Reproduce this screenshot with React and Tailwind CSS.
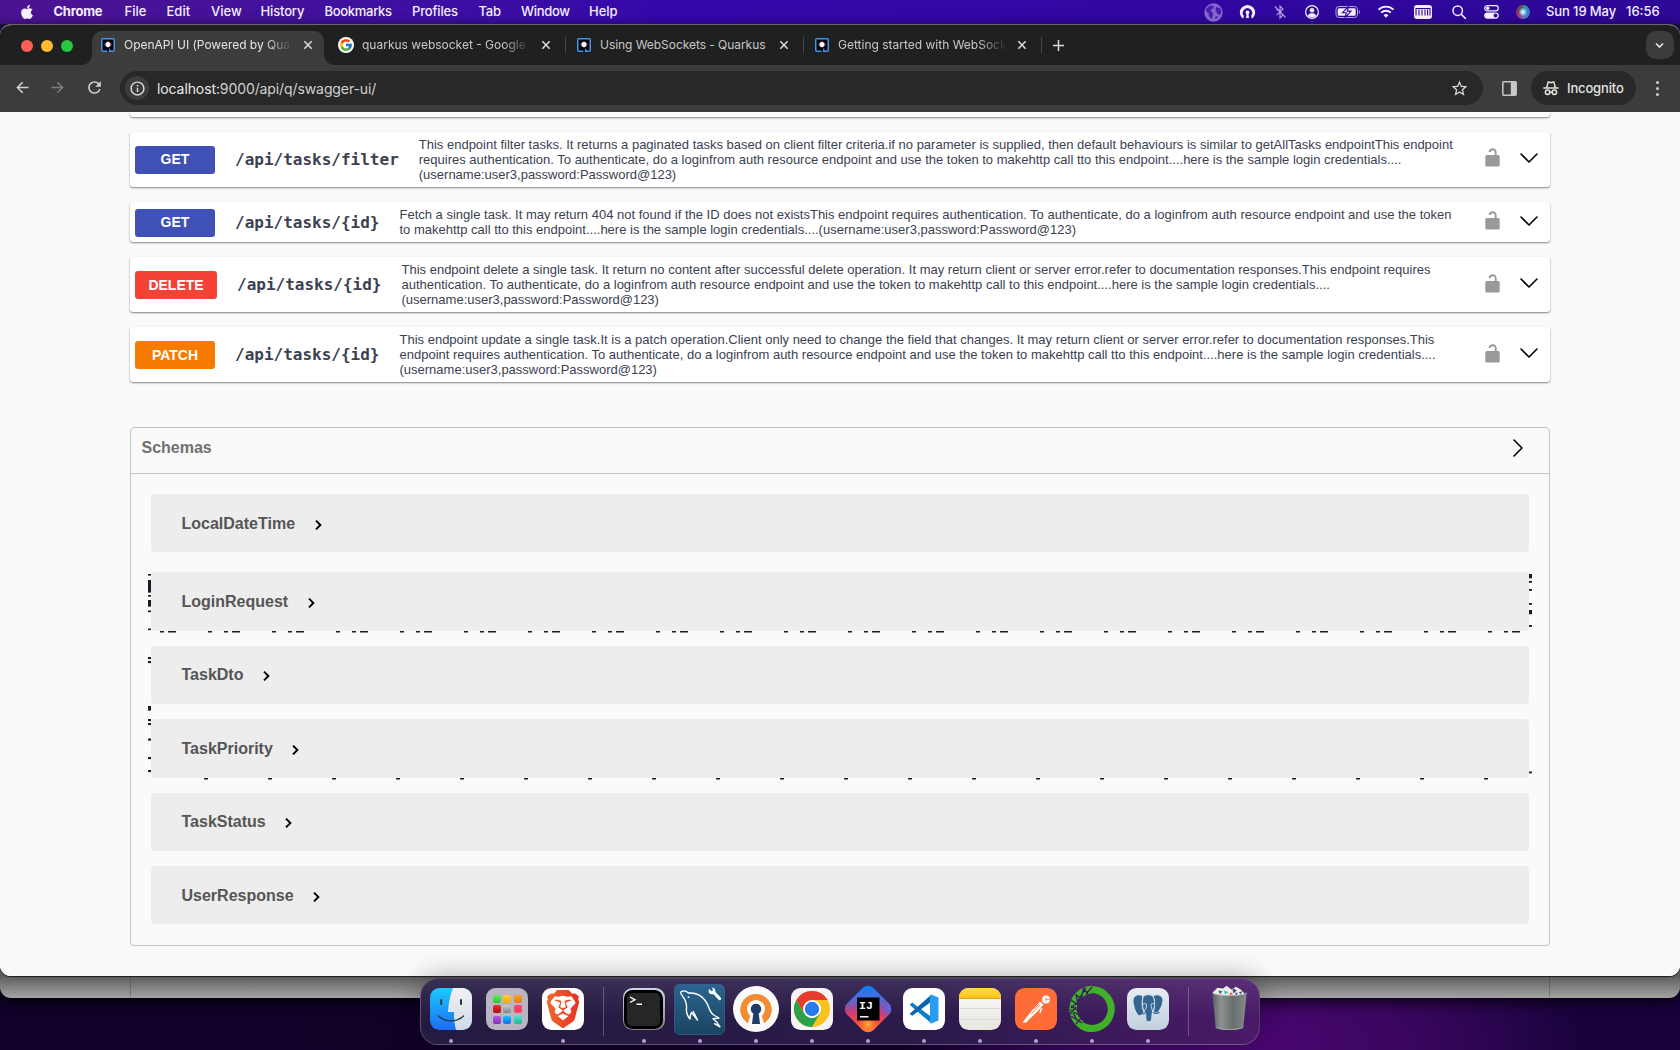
import React from "react";
import { FaApple } from "react-icons/fa";
import { FcGoogle } from "react-icons/fc";
import { SiBrave } from "react-icons/si";
import { MdRefresh, MdStarBorder, MdOutlineInfo } from "react-icons/md";

const UI = "font-['Inter',sans-serif]";
const HELV = "font-['Liberation_Sans',Arial,sans-serif]";

const menus = [
  ["Chrome", "w-[71px] font-bold tracking-[-0.25px]"],
  ["File", "w-[42px] font-medium"],
  ["Edit", "w-[44.5px] font-medium"],
  ["View", "w-[49.5px] font-medium"],
  ["History", "w-[64px] font-medium tracking-[-0.15px]"],
  ["Bookmarks", "w-[87.5px] font-medium tracking-[-0.3px]"],
  ["Profiles", "w-[66.5px] font-medium tracking-[-0.15px]"],
  ["Tab", "w-[42.5px] font-medium tracking-[-0.2px]"],
  ["Window", "w-[68px] font-medium tracking-[-0.3px]"],
  ["Help", "w-[40px] font-medium"],
];

function Keyhole({ size, body, hole, back }) {
  return (
    <svg width={size} height={size} viewBox="0 0 24 24">
      {back && <circle cx="12" cy="12" r="12" fill={back} />}
      {back ? (
        <path d="M7.800 19.400 9 15.600A4.700 4.700 0 1 1 15 15.600L16.200 19.400A8.200 8.200 0 1 0 7.800 19.400Z" fill={body} />
      ) : (
        <path d="M5.600 20.800 7 17A6.600 6.600 0 1 1 17 17L18.400 20.800A10.800 10.800 0 1 0 5.600 20.800Z" fill={body} />
      )}
      <path d="M12 9.300a2.700 2.700 0 0 1 1.400 5l.7 5.500H9.900l.7-5.500a2.700 2.700 0 0 1 1.400-5Z" fill={hole} />
    </svg>
  );
}

function MenuBar() {
  return (
    <div className={`flex h-6 items-center bg-gradient-to-r from-[#4c1391] via-[#3507ab] via-40% to-[#2d0796] text-[13px] leading-none text-[#f3effb] ${UI}`}>
      <div className="flex w-[53.5px] justify-center pb-px">
        <FaApple size={16} />
      </div>
      {menus.map(([name, cls]) => (
        <span key={name} className={`shrink-0 pb-px whitespace-nowrap ${cls}`}>{name}</span>
      ))}
      <div className="ml-auto flex h-full items-center">
        <div className="flex w-9 justify-center">
          <svg width="19" height="19" viewBox="0 0 19 19">
            <circle cx="9.500" cy="9.500" r="9.200" fill="#8566cf" />
            <path d="M2.500 5.500 6 2.500l4 .5-1 2.500L6.500 7.500l2 2 .5 2.500-1.500 4.500L5 13l-.5-3-2.500-1.500ZM12 4l4 1 1.500 3.500L16 12l-2.500-1L11.500 7.500ZM11 14l2.500-1 .5 1.500-2.500 1.500Z" fill="#4a1db0" />
          </svg>
        </div>
        <div className="flex w-[33px] justify-center"><Keyhole size={17} body="#f6f2ff" hole="#f6f2ff" /></div>
        <div className="flex w-[31px] justify-center text-[#b8a4ea]">
          <svg width="14" height="16" viewBox="0 0 14 16" fill="none" stroke="currentColor" strokeWidth="1.1">
            <path d="M3.500 11.200 10 5 7 2v12l3-3.200-2.400-2.200M5.300 6.700 3.500 5M2 2.500l10.500 11" />
          </svg>
        </div>
        <div className="flex w-[33px] justify-center">
          <svg width="16" height="16" viewBox="0 0 16 16">
            <circle cx="8" cy="8" r="6.400" fill="none" stroke="#f3effb" strokeWidth="1.200" />
            <circle cx="8" cy="6.200" r="2.300" fill="#f3effb" />
            <path d="M3.900 11.500C4.700 9.700 6 9.200 8 9.200s3.300.5 4.100 2.300A5.600 5.600 0 0 1 8 13.400a5.600 5.600 0 0 1-4.100-1.900Z" fill="#f3effb" />
          </svg>
        </div>
        <div className="flex w-[39px] justify-center">
          <svg width="26" height="14" viewBox="0 0 26 14">
            <rect x="1" y="1.500" width="21.500" height="11" rx="3" fill="none" stroke="#b5a3e6" />
            <rect x="2.700" y="3.200" width="18" height="7.600" rx="1.500" fill="#f3effb" />
            <path d="M23.800 5v4c1.500-.5 1.500-3.500 0-4Z" fill="#b5a3e6" />
            <path d="M13.500 1.500 7.500 7.700h3.800l-1.200 4.800 6-6.400h-3.800Z" fill="#f3effb" stroke="#2f07a0" strokeWidth="1.100" />
          </svg>
        </div>
        <div className="flex w-[37px] justify-center">
          <svg width="18" height="14" viewBox="0 0 18 14" fill="none" stroke="#f3effb" strokeWidth="1.900">
            <path d="M1.500 4.700a10.600 10.600 0 0 1 15 0M4.200 7.700a6.800 6.800 0 0 1 9.600 0" />
            <path d="M9 12.800 6.600 10.300a3.400 3.400 0 0 1 4.800 0Z" fill="#f3effb" stroke="none" />
          </svg>
        </div>
        <div className="flex w-[38px] justify-center">
          <svg width="18" height="14" viewBox="0 0 18 14">
            <rect width="18" height="14" rx="3" fill="#f3effb" />
            <path d="M2 10.500V3.500h14v7M5 4.500v6M8 4.500v6M11 4.500v6M13.600 4.500v6" fill="none" stroke="#3507a0" strokeWidth="1.100" />
          </svg>
        </div>
        <div className="flex w-[33px] justify-center">
          <svg width="14" height="14" viewBox="0 0 14 14" fill="none" stroke="#f3effb" strokeWidth="1.500">
            <circle cx="5.700" cy="5.700" r="4.700" />
            <path d="m9.200 9.200 4.200 4.200" strokeLinecap="round" />
          </svg>
        </div>
        <div className="flex w-[33px] justify-center">
          <svg width="15" height="14" viewBox="0 0 15 14">
            <rect x=".7" y=".7" width="13.600" height="5.200" rx="2.600" fill="none" stroke="#f3effb" strokeWidth="1.200" />
            <circle cx="3.700" cy="3.300" r="1.700" fill="#f3effb" />
            <rect x=".2" y="7.400" width="14.600" height="6.300" rx="3.100" fill="#f3effb" />
            <circle cx="11.500" cy="10.500" r="1.900" fill="#3507a0" />
          </svg>
        </div>
        <div className="flex w-[30px] justify-center">
          <div className="size-[14px] rounded-full bg-[radial-gradient(circle_at_50%_50%,#ffffff_0%,#9fd8ef_18%,transparent_45%),conic-gradient(#2fa36f,#2b7fd4_90deg,#5a7fc0_160deg,#a63a8a_220deg,#8a2f56_280deg,#3a6a6a)]" />
        </div>
        <span className="w-[88px] pb-px pl-2 font-medium whitespace-pre tracking-[-0.1px]">Sun 19 May</span>
        <span className="w-[54px] pb-px font-medium">16:56</span>
      </div>
    </div>
  );
}

function Favicon() {
  return (
    <svg width="14" height="14" viewBox="0 0 14 14" className="shrink-0">
      <rect width="14" height="14" rx="2" fill="#4695eb" />
      <path d="M1.500 1.500h11v11H9.800L8.600 10l-1 4H6.300v-1.500H1.500Z" fill="#05070c" />
      <path d="M7 3.500 9.500 5v3L7 9.500 4.500 8V5Z" fill="#fff" />
      <path d="M3.700 5.200 5.500 6.300 3.700 7.500Z" fill="#4695eb" />
      <path d="m10.500 5.400-1.800 1 1.800 1.200Z" fill="#ff3050" />
      <path d="M5 3.700h1.700L5.500 5Z" fill="#ff3050" />
    </svg>
  );
}

function Close() {
  return (
    <svg width="10" height="10" viewBox="0 0 10 10" className="shrink-0" stroke="#dcdcdc" strokeWidth="1.500">
      <path d="m1.300 1.300 7.400 7.400M8.700 1.300 1.300 8.700" />
    </svg>
  );
}

function TabStrip() {
  const title = "overflow-hidden whitespace-nowrap text-[12px] leading-4";
  const fade = "[mask-image:linear-gradient(to_right,#000_84%,transparent)]";
  return (
    <div className={`flex h-10 items-start bg-[#1f2120] pt-[6px] ${UI}`}>
      <div className="flex h-[29px] w-[92px] items-center gap-2 pl-[21px]">
        <i className="size-3 rounded-full bg-[#ff5f57]" />
        <i className="size-3 rounded-full bg-[#febc2e]" />
        <i className="size-3 rounded-full bg-[#28c840]" />
      </div>
      <div className="relative flex h-[34px] w-[232px] items-center rounded-t-[10px] bg-[#3c3c3c] pb-[6px] pl-[9px] text-[#e3e3e3]">
        <i className="absolute bottom-0 -left-[10px] size-[10px] bg-[radial-gradient(circle_at_0_0,transparent_9.5px,#3c3c3c_10px)]" />
        <i className="absolute -right-[10px] bottom-0 size-[10px] bg-[radial-gradient(circle_at_100%_0,transparent_9.5px,#3c3c3c_10px)]" />
        <Favicon />
        <span className={`ml-[9px] w-[168px] tracking-[-0.02px] ${title} ${fade}`}>OpenAPI UI (Powered by Quarkus)</span>
        <span className="ml-[11px] flex"><Close /></span>
      </div>
      <div className="flex h-[28px] w-[241px] items-center pl-[14px] text-[#c7c7c7]">
        <span className="flex size-4 items-center justify-center rounded-full bg-white"><FcGoogle size={14} /></span>
        <span className={`ml-2 w-[168px] ${title} ${fade}`}>quarkus websocket - Google Search</span>
        <span className="ml-[11px] flex"><Close /></span>
      </div>
      <div className="flex h-[28px] w-[238px] items-center text-[#c7c7c7]">
        <i className="mr-[11px] h-4 w-px bg-[#474747]" />
        <Favicon />
        <span className={`ml-[9px] w-[168px] tracking-[-0.05px] ${title}`}>Using WebSockets - Quarkus</span>
        <span className="ml-[11px] flex"><Close /></span>
      </div>
      <div className="flex h-[28px] w-[238px] items-center text-[#c7c7c7]">
        <i className="mr-[11px] h-4 w-px bg-[#474747]" />
        <Favicon />
        <span className={`ml-[9px] w-[168px] ${title} ${fade}`}>Getting started with WebSockets</span>
        <span className="ml-[11px] flex"><Close /></span>
      </div>
      <div className="flex h-[28px] items-center">
        <i className="mr-[10.5px] h-4 w-px bg-[#474747]" />
        <svg width="11" height="11" viewBox="0 0 11 11" stroke="#dcdcdc" strokeWidth="1.500"><path d="M5.500 0v11M0 5.500h11" /></svg>
      </div>
      <div className="mr-[6.5px] ml-auto flex size-7 items-center justify-center rounded-[10px] bg-[#3c3c3c]">
        <svg width="9" height="7" viewBox="0 0 9 7" fill="none" stroke="#e3e3e3" strokeWidth="1.700"><path d="m1 1.500 3.500 3.500L8 1.500" /></svg>
      </div>
    </div>
  );
}

function Toolbar() {
  return (
    <div className={`flex h-[47px] items-start bg-[#3c3c3c] pt-[6px] ${UI}`}>
      <div className="flex h-[34px] w-[120px] items-center pb-px pl-[16px]">
        <svg width="13" height="13" viewBox="0 0 13 13" fill="none" stroke="#d0d0d0" strokeWidth="1.600"><path d="M12.500 6.500H1.500M6.700 1.200 1.400 6.500l5.300 5.300" /></svg>
        <svg width="13" height="13" viewBox="0 0 13 13" className="ml-[22px]" fill="none" stroke="#7d7d7d" strokeWidth="1.600"><path d="M.5 6.500h11M6.300 1.200l5.300 5.300-5.300 5.300" /></svg>
        <MdRefresh size={19} color="#d0d0d0" className="ml-[20.500px]" />
      </div>
      <div className="flex h-[34px] w-[1362.5px] items-center rounded-full bg-[#282828] pl-[5px]">
        <span className="flex size-6 items-center justify-center rounded-full bg-[#3c3c3c]"><MdOutlineInfo size={17} color="#dedede" /></span>
        <span className="ml-2 text-[14px] tracking-[-0.1px] text-[#d0d0d0]"><span className="text-[#e8e8e8]">localhost:</span>9000/api/q/swagger-ui/</span>
        <MdStarBorder size={19} color="#d8d8d8" className="mr-[14px] ml-auto" />
      </div>
      <div className="flex h-[34px] w-[48.5px] items-center pl-[19px]">
        <svg width="15" height="15" viewBox="0 0 15 15"><rect x=".8" y=".8" width="13.400" height="13.400" rx="1" fill="none" stroke="#c7c7c7" strokeWidth="1.500" /><path d="M8.800 1h5.400v13H8.800Z" fill="#c7c7c7" /></svg>
      </div>
      <div className="flex h-[34px] w-[105px] items-center rounded-full bg-[#282828] pl-3 text-[13px] font-medium text-[#e3e3e3]">
        <svg width="16" height="16" viewBox="0 0 16 16" fill="none" stroke="#e3e3e3" strokeWidth="1.500">
          <path d="M.3 8h15.400M3.700 7.600 5.200 1.900 8 2.700l2.800-.8 1.500 5.700M6.700 12.300q1.300-.8 2.600 0" />
          <circle cx="4.600" cy="12.300" r="2.200" /><circle cx="11.400" cy="12.300" r="2.200" />
        </svg>
        <span className="mt-px ml-2 tracking-[-0.16px]">Incognito</span>
      </div>
      <div className="flex h-[34px] w-[43px] flex-col items-center justify-center gap-[3px]">
        <i className="size-[3px] rounded-full bg-[#d0d0d0]" />
        <i className="size-[3px] rounded-full bg-[#d0d0d0]" />
        <i className="size-[3px] rounded-full bg-[#d0d0d0]" />
      </div>
    </div>
  );
}

const CARD = "rounded-[3px] bg-white shadow-[0_1px_2px_rgba(0,0,0,0.48)]";

const ops = [
  {
    m: "GET", path: "/api/tasks/filter", box: "h-[55.5px]", badge: "w-20 bg-[#3f51b5]",
    lines: [
      "This endpoint filter tasks. It returns a paginated tasks based on client filter criteria.if no parameter is supplied, then default behaviours is similar to getAllTasks endpointThis endpoint",
      "requires authentication. To authenticate, do a loginfrom auth resource endpoint and use the token to makehttp call tto this endpoint....here is the sample login credentials....",
      "(username:user3,password:Password@123)",
    ],
  },
  {
    m: "GET", path: "/api/tasks/{id}", box: "h-[40px]", badge: "w-20 bg-[#3f51b5]",
    lines: [
      "Fetch a single task. It may return 404 not found if the ID does not existsThis endpoint requires authentication. To authenticate, do a loginfrom auth resource endpoint and use the token",
      "to makehttp call tto this endpoint....here is the sample login credentials....(username:user3,password:Password@123)",
    ],
  },
  {
    m: "DELETE", path: "/api/tasks/{id}", box: "h-[55px]", badge: "w-[82px] bg-[#f44336]",
    lines: [
      "This endpoint delete a single task. It return no content after successful delete operation. It may return client or server error.refer to documentation responses.This endpoint requires",
      "authentication. To authenticate, do a loginfrom auth resource endpoint and use the token to makehttp call to this endpoint....here is the sample login credentials....",
      "(username:user3,password:Password@123)",
    ],
  },
  {
    m: "PATCH", path: "/api/tasks/{id}", box: "h-[55px]", badge: "w-20 bg-[#f57c00]",
    lines: [
      "This endpoint update a single task.It is a patch operation.Client only need to change the field that changes. It may return client or server error.refer to documentation responses.This",
      "endpoint requires authentication. To authenticate, do a loginfrom auth resource endpoint and use the token to makehttp call tto this endpoint....here is the sample login credentials....",
      "(username:user3,password:Password@123)",
    ],
  },
];

function Operation({ op }) {
  return (
    <div className={`flex items-center pl-[5px] ${CARD} ${op.box}`}>
      <div className={`mt-px flex h-7 items-center justify-center rounded-[3px] text-[14px] font-bold text-white ${op.badge}`}>{op.m}</div>
      <div className="mt-px ml-5 font-['DejaVu_Sans_Mono',monospace] text-[16px] leading-5 font-bold text-[#3b4151]">{op.path}</div>
      <div className="ml-5 text-[13px] leading-[15px] text-[#3b4151]">
        {op.lines.map((l) => (
          <p key={l} className="whitespace-nowrap">{l}</p>
        ))}
      </div>
      <div className="mr-[11px] ml-auto flex shrink-0 items-center pb-[3px]">
        <svg width="15" height="19" viewBox="0 0 15 19">
          <path d="M.3 8.500q0-1.500 1.500-1.500h11.400q1.500 0 1.500 1.500V17q0 1.500-1.500 1.500H1.800Q.3 18.500.3 17Z" fill="#999" />
          <path d="M10.700 8V4.200c0-1.800-1-3-2.900-3-1.900 0-3 .9-3.200 2.800" fill="none" stroke="#999" strokeWidth="1.900" />
        </svg>
        <svg width="20" height="12" viewBox="0 0 20 12" className="ml-[19px]" fill="none" stroke="#000" strokeWidth="1.600" strokeLinecap="round" strokeLinejoin="round">
          <path d="m2 2 8 8 8-8" />
        </svg>
      </div>
    </div>
  );
}

const models = [
  ["LocalDateTime", "mb-5"],
  ["LoginRequest", "mb-[15px]"],
  ["TaskDto", "mb-[15px]"],
  ["TaskPriority", "mb-[15px]"],
  ["TaskStatus", "mb-[15px]"],
  ["UserResponse", ""],
];

/* Stray outline fragments around the model rows: [x, y, w, h] relative to the schema box. */
function OutlineFragments() {
  const r = [];
  const left = [[147, 1], [153, 12], [168, 1], [173, 6], [183.5, 1], [201.5, 1], [230, 1.5], [234, 1.5], [279, 4], [292, 1.5], [296, 1.5], [311.5, 1.5], [330, 1.5], [343, 1.5]];
  left.forEach(([y, h]) => r.push([18, y, 3, h + 0.6]));
  [[147, 4], [154, 1.5], [162, 1.5], [176, 1.5], [183, 4], [198, 1.5], [344.5, 1.5]].forEach(([y, h]) => r.push([1399, y, 3, h + 0.3]));
  r.push([30, 204, 4, 1.5], [38, 204, 8, 1.5]);
  for (let i = 0; i <= 20; i++) {
    const x = 78 + i * 64;
    r.push([x, 204, 4, 1.5], [x + 16, 204, 4, 1.5], [x + 24, 204, 8, 1.5], [x - 4, 351, 4, 1.5]);
  }
  return (
    <svg className="pointer-events-none absolute -top-px -left-px" width="1420" height="519" fill="#1b1a26">
      {r.map(([x, y, w, h], i) => <rect key={i} x={x} y={y} width={w} height={h} />)}
    </svg>
  );
}

function Page() {
  return (
    <div className={`h-[864px] overflow-hidden bg-[#fafafa] px-[130px] ${HELV}`}>
      <div className={`mb-[14.5px] h-[5px] rounded-t-none ${CARD}`} />
      <div className="flex flex-col gap-[15px]">
        {ops.map((op, i) => <Operation key={i} op={op} />)}
      </div>
      <div className="relative mt-[45px] h-[519px] rounded-[4px] border border-[#c4c4c4]">
        <div className="flex h-[46px] items-center justify-between border-b border-[#c4c4c4] pr-[25px] pb-[5px] pl-[10.5px] text-[16px] font-bold text-[#707070]">
          Schemas
          <svg width="12" height="20" viewBox="0 0 12 20" fill="none" stroke="#000" strokeWidth="1.600" strokeLinecap="round" strokeLinejoin="round"><path d="m2 2 8 8-8 8" /></svg>
        </div>
        <div className="px-5 pt-5">
          {models.map(([name, mb]) => (
            <div key={name} className={`flex h-[58.4px] items-center rounded-[4px] bg-[#ededed] pl-[30.5px] text-[16px] font-bold text-[#555] ${mb}`}>
              <span className="pt-px">{name}</span>
              <svg width="8" height="12" viewBox="0 0 8 12" className="mt-[3px] ml-[19.5px]" fill="none" stroke="#000" strokeWidth="1.900"><path d="m1 1.600 4.400 4.400L1 10.400" /></svg>
            </div>
          ))}
        </div>
        <OutlineFragments />
      </div>
    </div>
  );
}

const tile = "size-[42px] rounded-[9.5px] overflow-hidden flex items-center justify-center";

function Finder() {
  return (
    <svg width="42" height="42" viewBox="0 0 42 42" className="rounded-[9.5px]">
      <defs><linearGradient id="fa" x2="0" y2="1"><stop stopColor="#1ccbfb" /><stop offset="1" stopColor="#1b6cf5" /></linearGradient>
        <linearGradient id="fb" x2="0" y2="1"><stop stopColor="#f2f2f4" /><stop offset="1" stopColor="#cfdbe8" /></linearGradient></defs>
      <rect width="42" height="42" fill="url(#fa)" />
      <path d="M23 0c-3 8-4.500 15-5 24h6c-.2 6 .4 12 2 18h16V0Z" fill="url(#fb)" />
      <path d="M11.200 12v4M31 12v4" stroke="#26374a" strokeWidth="2" strokeLinecap="round" />
      <path d="M8.500 28c7 6.500 18 6.500 25 0" fill="none" stroke="#26374a" strokeWidth="1.400" strokeLinecap="round" />
    </svg>
  );
}

function Launchpad() {
  return (
    <div className={`${tile} bg-[#b9b5c3]`}>
      <div className="grid grid-cols-3 gap-[2.5px]">
        <i className="size-[8px] rounded-[2px] bg-gradient-to-b from-[#5cf05c] to-[#27c52c]" />
        <i className="size-[8px] rounded-[2px] bg-gradient-to-b from-[#ffcf2e] to-[#f7a800]" />
        <i className="size-[8px] rounded-[2px] bg-gradient-to-b from-[#ff9e17] to-[#ea7a1c]" />
        <i className="size-[8px] rounded-[2px] bg-gradient-to-b from-[#f02f2f] to-[#b90606]" />
        <i className="size-[8px] rounded-[2px] bg-gradient-to-b from-[#c6ced6] to-[#7e8389]" />
        <i className="size-[8px] rounded-[2px] bg-gradient-to-b from-[#ff3b78] to-[#f84455]" />
        <i className="size-[8px] rounded-[2px] bg-gradient-to-b from-[#b756e5] to-[#8131b4]" />
        <i className="size-[8px] rounded-[2px] bg-gradient-to-b from-[#12c5fb] to-[#1d67ef]" />
        <i className="size-[8px] rounded-[2px] bg-gradient-to-b from-[#4ce3d0] to-[#1eb48b]" />
      </div>
    </div>
  );
}

function Brave() {
  return (
    <div className={`${tile} bg-white`}>
      <svg width="0" height="0" className="absolute"><defs><linearGradient id="br"><stop stopColor="#f1692b" /><stop offset="1" stopColor="#e8301f" /></linearGradient></defs></svg>
      <SiBrave size={38} style={{ fill: "url(#br)" }} />
    </div>
  );
}

function Terminal() {
  return (
    <div className={`${tile} bg-gradient-to-b from-[#c8dae3] to-[#85807c] p-[1.5px]`}>
      <div className="size-full rounded-[8.5px] bg-black p-[3px]">
        <svg width="33" height="33" viewBox="0 0 33 33" className="rounded-[5px] bg-[#262626]" fill="none" stroke="#fff" strokeWidth="1.400"><path d="m3 4 5 2.800L3 9.500M9.500 11.300H15" /></svg>
      </div>
    </div>
  );
}

function Workbench() {
  return (
    <svg width="51" height="51" viewBox="0 0 51 51">
      <defs><linearGradient id="mw" x2="0" y2="1"><stop stopColor="#2b6591" /><stop offset="1" stopColor="#1b4462" /></linearGradient></defs>
      <rect x=".5" y=".5" width="50" height="50" rx="5" fill="url(#mw)" stroke="#3c7199" strokeWidth=".6" />
      <path d="M6.500 8c3-2 6-.8 8 1 10-.7 17 5 20.500 15 1 3 2 5.500 5.500 7.500l4.500 2.500-6 .8 3.500 3 3.500 5-6-3.500M6.500 8c.5 3 3 5 4.500 8 1 3 2 5 1.500 8-.5 4 .5 8 3.500 11 0-3 .5-4.500 1.500-6.500l6 7.500-4.500-9" fill="none" stroke="#fff" strokeWidth="1.400" strokeLinejoin="round" />
      <circle cx="14.500" cy="13.200" r=".9" fill="#fff" />
      <path d="m38.500 7 7 7.500" stroke="#fff" strokeWidth="3.200" strokeLinecap="round" />
      <circle cx="38" cy="7" r="3.300" fill="#fff" /><path d="m35 3 3.500 3.500" stroke="#285d85" strokeWidth="2.400" />
    </svg>
  );
}

function Chrome() {
  return (
    <div className={`${tile} bg-[#f4f4f4]`}>
      <svg width="38" height="38" viewBox="-19 -19 38 38">
        <circle r="18" fill="#fcc31e" />
        <path d="M-15.600-9A18 18 0 0 1 15.600-9H0L-7.800 4.500Z" fill="#e63b2e" />
        <path d="M-15.600-9A18 18 0 0 0 0 18L7.800 4.500-7.800 4.500Z" fill="#2da04c" />
        <circle r="9" fill="#fff" /><circle r="7.200" fill="#2a78ee" />
      </svg>
    </div>
  );
}

function Idea() {
  return (
    <svg width="48" height="48" viewBox="0 0 48 48">
      <defs>
        <linearGradient id="ij" x2="0" y2="1"><stop stopColor="#0c7ff5" /><stop offset=".3" stopColor="#5468d8" /><stop offset=".58" stopColor="#d03a70" /><stop offset=".85" stopColor="#ff5038" /><stop offset="1" stopColor="#ff7a3c" /></linearGradient>
        <radialGradient id="ig" cx=".5" cy=".82" r=".25"><stop stopColor="#ffb72e" /><stop offset="1" stopColor="#ff5a38" stopOpacity="0" /></radialGradient>
        <radialGradient id="ib" cx="1" cy=".5" r=".25"><stop stopColor="#4a6cf0" /><stop offset="1" stopColor="#4a6cf0" stopOpacity="0" /></radialGradient>
      </defs>
      {["url(#ij)", "url(#ig)", "url(#ib)"].map((f) => (
        <path key={f} d="M18.500 3Q24-1.500 29.500 3L45 18.500Q49.500 24 45 29.500L29.500 45Q24 49.500 18.500 45L3 29.500Q-1.500 24 3 18.500Z" fill={f} />
      ))}
      <rect x="13" y="12.500" width="22.500" height="23" fill="#000" />
      <text x="15" y="24" fill="#fff" fontFamily="Liberation Mono, monospace" fontSize="11.500" fontWeight="700">IJ</text>
      <path d="M16 31.800h8.500" stroke="#fff" strokeWidth="1.500" />
    </svg>
  );
}

function Code() {
  return (
    <div className={`${tile} bg-white`}>
      <svg width="30" height="30" viewBox="0 0 30 30">
        <path d="M1 10.500 3.200 8.500 22.500 23v6.500L1.400 11.500Z" fill="#0a7dcb" />
        <path d="M1 19.500 22.500.5V7.500L3.200 21.800.8 20Z" fill="#0667ad" />
        <path d="M22 .5 29.500 3.500v23L22 29.500l-1-.6V1Z" fill="#2a9df0" />
      </svg>
    </div>
  );
}

function Notes() {
  return (
    <div className="flex size-[42px] flex-col overflow-hidden rounded-[9.5px] bg-gradient-to-b from-[#fbfbfb] to-[#e8e6df]">
      <div className="h-[11px] border-b border-[#d2a52b] bg-gradient-to-b from-[#ffdb48] to-[#fdc50d]" />
      <div className="mt-[9px] h-px bg-[#dddcda]" />
      <div className="mt-[10px] h-px bg-[#dddcda]" />
    </div>
  );
}

function PostmanIcon() {
  return (
    <div className={`${tile} bg-[#ff6c37]`}>
      <svg width="42" height="42" viewBox="0 0 42 42">
        <circle cx="31" cy="11.500" r="3.900" fill="#fff" />
        <path d="M31 9.500v4M31 11.500h3" stroke="#ff6c37" strokeWidth=".8" />
        <path d="M25 13.500 28.500 16.500 22.500 23.500 13 32.500 11.500 34.500H7.500L17 22.500Z" fill="#fff" />
        <path d="m19 21 5-5M16.500 25.500l8.500-8" stroke="#ff6c37" strokeWidth=".8" />
        <path d="m26.500 20-1.500 5" stroke="#fff" strokeWidth="1.400" />
      </svg>
    </div>
  );
}

function Anaconda() {
  return (
    <svg width="48" height="48" viewBox="0 0 48 48" fill="none">
      <path d="M24 4.500A19.500 19.500 0 1 1 13 40.300" stroke="#43b02a" strokeWidth="7" />
      <path d="M13.500 40A19.500 19.500 0 0 1 24 4.500" stroke="#43b02a" strokeWidth="7.500" />
      <path d="M8 39 14 32M3 31l11 7M2 25l9 5M1 30l7-8M3 21l6 4M3 15l7 5M3 23l10-9M8 10l6 4M9 17l9-14M15 3l5 6M18 9l6-7M9 35 5 28M8 9l2 11M16 2l-3 12" stroke="#3a1d5c" strokeWidth="1.300" />
    </svg>
  );
}

function Elephant() {
  return (
    <div className={`${tile} bg-gradient-to-b from-[#e6ecf2] to-[#c2d0de]`}>
      <svg width="32" height="32" viewBox="0 0 32 32">
        <path d="M10.500 3C5.500.8 1 3 1.500 8.500 2 14 4.500 21.500 7.500 22.200c1.500.3 2.700-1.700 4-3.200C9.200 15 9.500 8 10.500 3Z" fill="#336791" />
        <path d="M21.500 3c5-2 9.500.5 9 5-.5 4-2.500 8-5 11.500-1 .8-2.500.3-3.500-1 1.500-5 1.500-11-.5-15.500Z" fill="#336791" />
        <path d="M11.300 3.200c3-2 6.400-2 9.400-.3 2.300 4 2.600 9.600.6 14.600-1.200 2-1.400 4-1.500 7-.1 2.500-.8 4.300-3 4.300-2.300 0-3-1.600-3-4.300 0-2.500.3-4.300-1.600-6.300-2.300-3.700-2.200-10-.9-15Z" fill="#336791" stroke="#dde6ee" strokeWidth=".9" />
        <path d="M11 11.500c1.800-1.500 3.300-1 3.500.5.3 2.500-1 4.500-2.500 6M21.800 11c-1.500-1-2.800-.5-2.800 1 0 2 1.200 3.500 1.500 6.500 1.600 1.500 4.500 1.500 7.500.5" fill="none" stroke="#dde6ee" strokeWidth=".9" />
        <path d="M9.500 20.500c1.800.8 3 .3 4-1M21 19.500c2 1.300 4.500 1 6.500-.3" fill="none" stroke="#336791" strokeWidth="1.200" />
      </svg>
    </div>
  );
}

function Trash() {
  return (
    <svg width="39" height="50" viewBox="0 0 42 52">
      <defs><linearGradient id="tr"><stop stopColor="#5c6263" /><stop offset=".25" stopColor="#8c9192" /><stop offset=".6" stopColor="#686d6e" /><stop offset="1" stopColor="#858a8b" /></linearGradient></defs>
      <path d="m3 8 5-5 6 1 4-3 5 4 5-3 5 3 4 4-3 5H7Z" fill="#ececec" />
      <path d="m9 6 4 1-2 3ZM24 3l5 3-4 3ZM31 8l4-1-2 3Z" fill="#4b4f63" />
      <path d="m15 6 5 2-4 2Z" fill="#35b9c9" /><path d="m22 8 3 2-4 1Z" fill="#d5532d" /><path d="m27 8 3 1-2 3Z" fill="#2a63b8" />
      <path d="M2.500 8.500c4 4 33 4 37 0L36 45c-.4 5-29.500 5-30 0Z" fill="url(#tr)" />
      <path d="M2.500 8.500c4 4 33 4 37 0" fill="none" stroke="#b6babb" strokeWidth=".8" />
      <path d="M6 45c1 4 29 4 30 0" fill="none" stroke="#a5a9aa" strokeWidth="1" />
    </svg>
  );
}

function DockItem({ children, dot = true }) {
  return (
    <div className="flex w-14 shrink-0 flex-col items-center">
      <div className="flex h-[60px] items-center justify-center">{children}</div>
      <i className={`size-1 rounded-full ${dot ? "bg-[#b49fd2]" : ""}`} />
    </div>
  );
}

function Dock() {
  return (
    <div className="absolute top-[978px] left-[420px] flex h-[67px] w-[840px] items-start rounded-[18px] border border-[#ffffff2e] bg-[linear-gradient(to_bottom,#ffffff18,transparent_60%),linear-gradient(to_right,#251a40,#2a1a4a_60%,#4a1a68)] pl-[2px] shadow-[0_-2px_26px_rgba(0,0,0,0.3)]">
      <DockItem><Finder /></DockItem>
      <DockItem dot={false}><Launchpad /></DockItem>
      <DockItem><Brave /></DockItem>
      <div className="mt-2 mr-[12px] ml-[11.5px] h-[49px] w-px shrink-0 bg-[#ffffff40]" />
      <DockItem><Terminal /></DockItem>
      <DockItem><Workbench /></DockItem>
      <DockItem><Keyhole size={46} back="#fbfbfb" body="#f38b30" hole="#1f3c66" /></DockItem>
      <DockItem><Chrome /></DockItem>
      <DockItem><Idea /></DockItem>
      <DockItem><Code /></DockItem>
      <DockItem><Notes /></DockItem>
      <DockItem><PostmanIcon /></DockItem>
      <DockItem><Anaconda /></DockItem>
      <DockItem><Elephant /></DockItem>
      <div className="mt-2 mr-[12px] ml-[12.5px] h-[49px] w-px shrink-0 bg-[#ffffff40]" />
      <DockItem dot={false}><Trash /></DockItem>
    </div>
  );
}

export default function App() {
  return (
    <div className="relative h-[1050px] w-[1680px] overflow-hidden bg-[#110126] bg-[radial-gradient(ellipse_340px_130px_at_1240px_1040px,#4b0673_0%,#3a065f_50%,transparent_100%),linear-gradient(to_right,#10022a,#100124_50%,#1c0540_75%,#18023c)]">
      <MenuBar />
      <div className="h-[974px] rounded-b-[11px] bg-[linear-gradient(to_bottom,#1a0a40_50px,#5c5c5c_60px,#5c5c5c_952px,#a4a4a4_974px)] shadow-[0_4px_14px_rgba(0,0,0,0.8)]">
        <div className="h-[952px] overflow-hidden rounded-[11px] border-t border-[#686868] bg-[#fafafa] shadow-[0_1px_1px_rgba(0,0,0,0.7)]">
          <TabStrip />
          <Toolbar />
          <Page />
        </div>
        <div className="mx-[130px] h-[22px] border-x border-[#00000030]" />
      </div>
      <Dock />
    </div>
  );
}
